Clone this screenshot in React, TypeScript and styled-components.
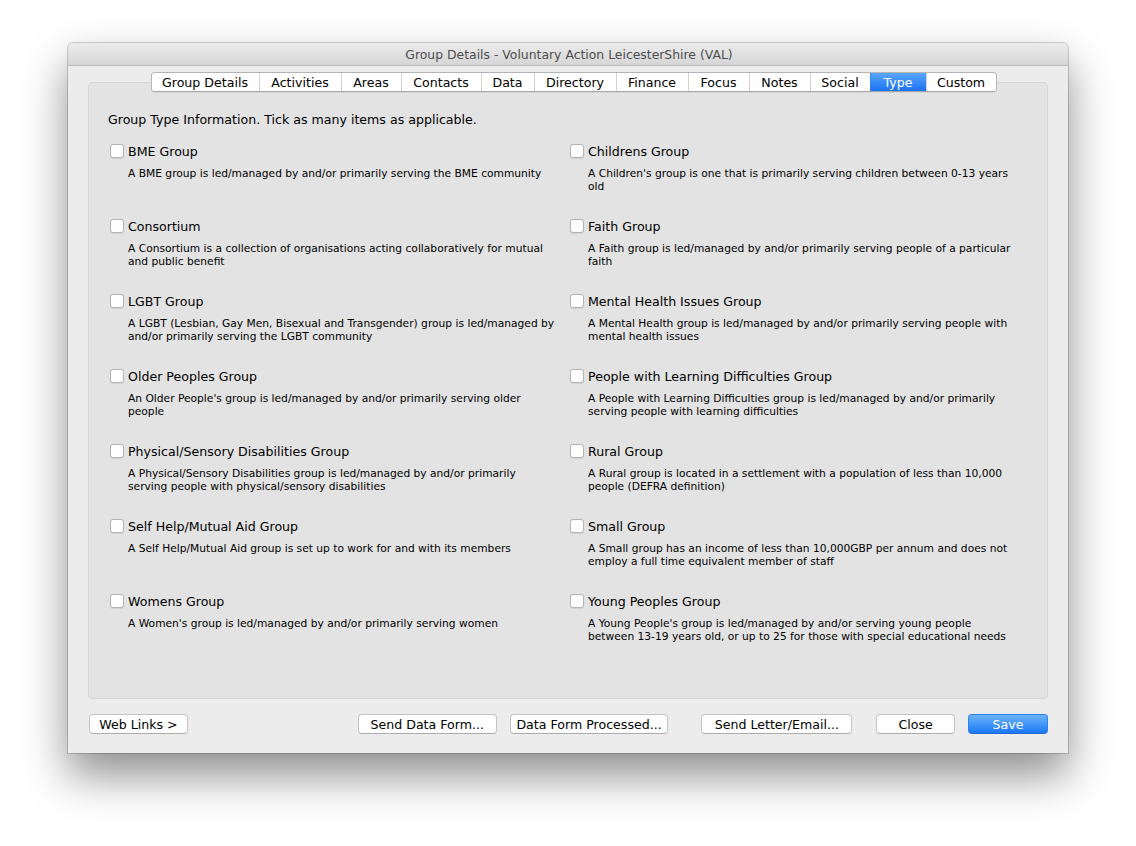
import React from "react";
import styled, { createGlobalStyle } from "styled-components";

const GlobalStyle = createGlobalStyle`
  html, body {
    margin: 0;
    padding: 0;
    background: #ffffff;
  }
  body {
    font-family: "DejaVu Sans", "Liberation Sans", sans-serif;
    color: #000;
  }
`;

const Page = styled.div`
  width: 1136px;
  height: 846px;
  padding: 43px 0 0 68px;
  box-sizing: border-box;
`;

const Window = styled.div`
  width: 1000px;
  height: 710px;
  background: #ececec;
  border-radius: 5px 5px 0 0;
  box-shadow: 0 0 0 1px rgba(0, 0, 0, 0.18), 0 22px 45px rgba(0, 0, 0, 0.45);
  display: flex;
  flex-direction: column;
  overflow: hidden;
`;

const TitleBar = styled.div`
  height: 22px;
  flex: none;
  display: flex;
  align-items: center;
  justify-content: center;
  padding-left: 2px;
  background: linear-gradient(#ececec, #d6d6d6);
  border-bottom: 1px solid #b9b9b9;
  font-size: 12.4px;
  color: #4d4d4d;
`;

const Body = styled.div`
  flex: 1;
  display: flex;
  flex-direction: column;
  padding: 6px 20px 0;
`;

const TabStrip = styled.div`
  display: flex;
  justify-content: center;
  position: relative;
  z-index: 1;
  padding-left: 11px;
`;

const TabGroup = styled.div`
  display: flex;
  height: 18px;
  background: #ffffff;
  border: 1px solid #b4b4b4;
  border-bottom-color: #a6a6a6;
  border-radius: 4px;
  overflow: hidden;
  box-shadow: 0 1px 0 rgba(0, 0, 0, 0.05);
`;

const Tab = styled.div<{ $w: number; $active?: boolean }>`
  width: ${(p) => p.$w}px;
  box-sizing: border-box;
  display: flex;
  align-items: center;
  justify-content: center;
  font-size: 12.6px;
  border-left: 1px solid ${(p) => (p.$active ? "#2f84f5" : "#d2d2d2")};
  color: ${(p) => (p.$active ? "#ffffff" : "#000")};
  background: ${(p) =>
    p.$active ? "linear-gradient(#5aa7fb, #1a72f2)" : "#ffffff"};
  &:first-child {
    border-left: none;
  }
`;

const Panel = styled.div`
  margin-top: -10px;
  height: 617px;
  box-sizing: border-box;
  background: #e3e3e3;
  border: 1px solid #d6d6d6;
  border-radius: 4px;
  padding: 29px 20px 0 19px;
`;

const Heading = styled.div`
  font-size: 12.6px;
  line-height: 16px;
  margin-bottom: 15px;
`;

const Grid = styled.div`
  display: grid;
  grid-template-columns: 460px 460px;
  grid-auto-rows: 75px;
  padding-left: 2px;
`;

const Item = styled.div`
  display: flex;
  flex-direction: column;
`;

const LabelRow = styled.label`
  display: flex;
  align-items: center;
  gap: 4px;
  height: 16px;
  font-size: 12.6px;
`;

const Box = styled.span`
  width: 14px;
  height: 14px;
  flex: none;
  background: #ffffff;
  border: 1px solid #b3b3b3;
  border-radius: 3px;
  box-sizing: border-box;
  box-shadow: 0 0.5px 1px rgba(0, 0, 0, 0.08);
`;

const Desc = styled.div`
  margin-top: 8px;
  padding-left: 18px;
  width: 427px;
  font-size: 10.68px;
  line-height: 13px;
`;

const Footer = styled.div`
  display: flex;
  align-items: center;
  height: 50px;
  padding: 0 0 0 1px;
`;

const Button = styled.div<{ $w: number; $primary?: boolean; $gap?: number }>`
  width: ${(p) => p.$w}px;
  height: 20px;
  margin-left: ${(p) => p.$gap ?? 0}px;
  box-sizing: border-box;
  display: flex;
  align-items: center;
  justify-content: center;
  font-size: 12.6px;
  border-radius: 4px;
  color: ${(p) => (p.$primary ? "#ffffff" : "#000")};
  background: ${(p) =>
    p.$primary ? "linear-gradient(#6cb3fb, #1b78f4)" : "#ffffff"};
  border: 1px solid ${(p) => (p.$primary ? "#2c80f0" : "#c3c3c3")};
  border-bottom-color: ${(p) => (p.$primary ? "#1f67d6" : "#acacac")};
`;

const tabs = [
  { name: "Group Details", w: 107 },
  { name: "Activities", w: 82 },
  { name: "Areas", w: 60 },
  { name: "Contacts", w: 80 },
  { name: "Data", w: 53 },
  { name: "Directory", w: 82 },
  { name: "Finance", w: 72 },
  { name: "Focus", w: 61 },
  { name: "Notes", w: 61 },
  { name: "Social", w: 60 },
  { name: "Type", w: 56, active: true },
  { name: "Custom", w: 70 },
];

const items = [
  ["BME Group", "A BME group is led/managed by and/or primarily serving the BME community"],
  ["Childrens Group", "A Children's group is one that is primarily serving children between 0-13 years old"],
  ["Consortium", "A Consortium is a collection of organisations acting collaboratively for mutual and public benefit"],
  ["Faith Group", "A Faith group is led/managed by and/or primarily serving people of a particular faith"],
  ["LGBT Group", "A LGBT (Lesbian, Gay Men, Bisexual and Transgender) group is led/managed by and/or primarily serving the LGBT community"],
  ["Mental Health Issues Group", "A Mental Health group is led/managed by and/or primarily serving people with mental health issues"],
  ["Older Peoples Group", "An Older People's group is led/managed by and/or primarily serving older people"],
  ["People with Learning Difficulties Group", "A People with Learning Difficulties group is led/managed by and/or primarily serving people with learning difficulties"],
  ["Physical/Sensory Disabilities Group", "A Physical/Sensory Disabilities group is led/managed by and/or primarily serving people with physical/sensory disabilities"],
  ["Rural Group", "A Rural group is located in a settlement with a population of less than 10,000 people (DEFRA definition)"],
  ["Self Help/Mutual Aid Group", "A Self Help/Mutual Aid group is set up to work for and with its members"],
  ["Small Group", "A Small group has an income of less than 10,000GBP per annum and does not employ a full time equivalent member of staff"],
  ["Womens Group", "A Women's group is led/managed by and/or primarily serving women"],
  ["Young Peoples Group", "A Young People's group is led/managed by and/or serving young people between 13-19 years old, or up to 25 for those with special educational needs"],
];

export default function App() {
  return (
    <>
      <GlobalStyle />
      <Page>
        <Window>
          <TitleBar>Group Details - Voluntary Action LeicesterShire (VAL)</TitleBar>
          <Body>
            <TabStrip>
              <TabGroup>
                {tabs.map((t) => (
                  <Tab key={t.name} $w={t.w} $active={t.active}>
                    {t.name}
                  </Tab>
                ))}
              </TabGroup>
            </TabStrip>
            <Panel>
              <Heading>Group Type Information. Tick as many items as applicable.</Heading>
              <Grid>
                {items.map(([label, desc]) => (
                  <Item key={label}>
                    <LabelRow>
                      <Box />
                      {label}
                    </LabelRow>
                    <Desc>{desc}</Desc>
                  </Item>
                ))}
              </Grid>
            </Panel>
            <Footer>
              <Button $w={99}>Web Links &gt;</Button>
              <Button $w={139} $gap={170}>Send Data Form...</Button>
              <Button $w={159} $gap={13}>Data Form Processed...</Button>
              <Button $w={151} $gap={33}>Send Letter/Email...</Button>
              <Button $w={79} $gap={24}>Close</Button>
              <Button $w={80} $gap={13} $primary>Save</Button>
            </Footer>
          </Body>
        </Window>
      </Page>
    </>
  );
}
